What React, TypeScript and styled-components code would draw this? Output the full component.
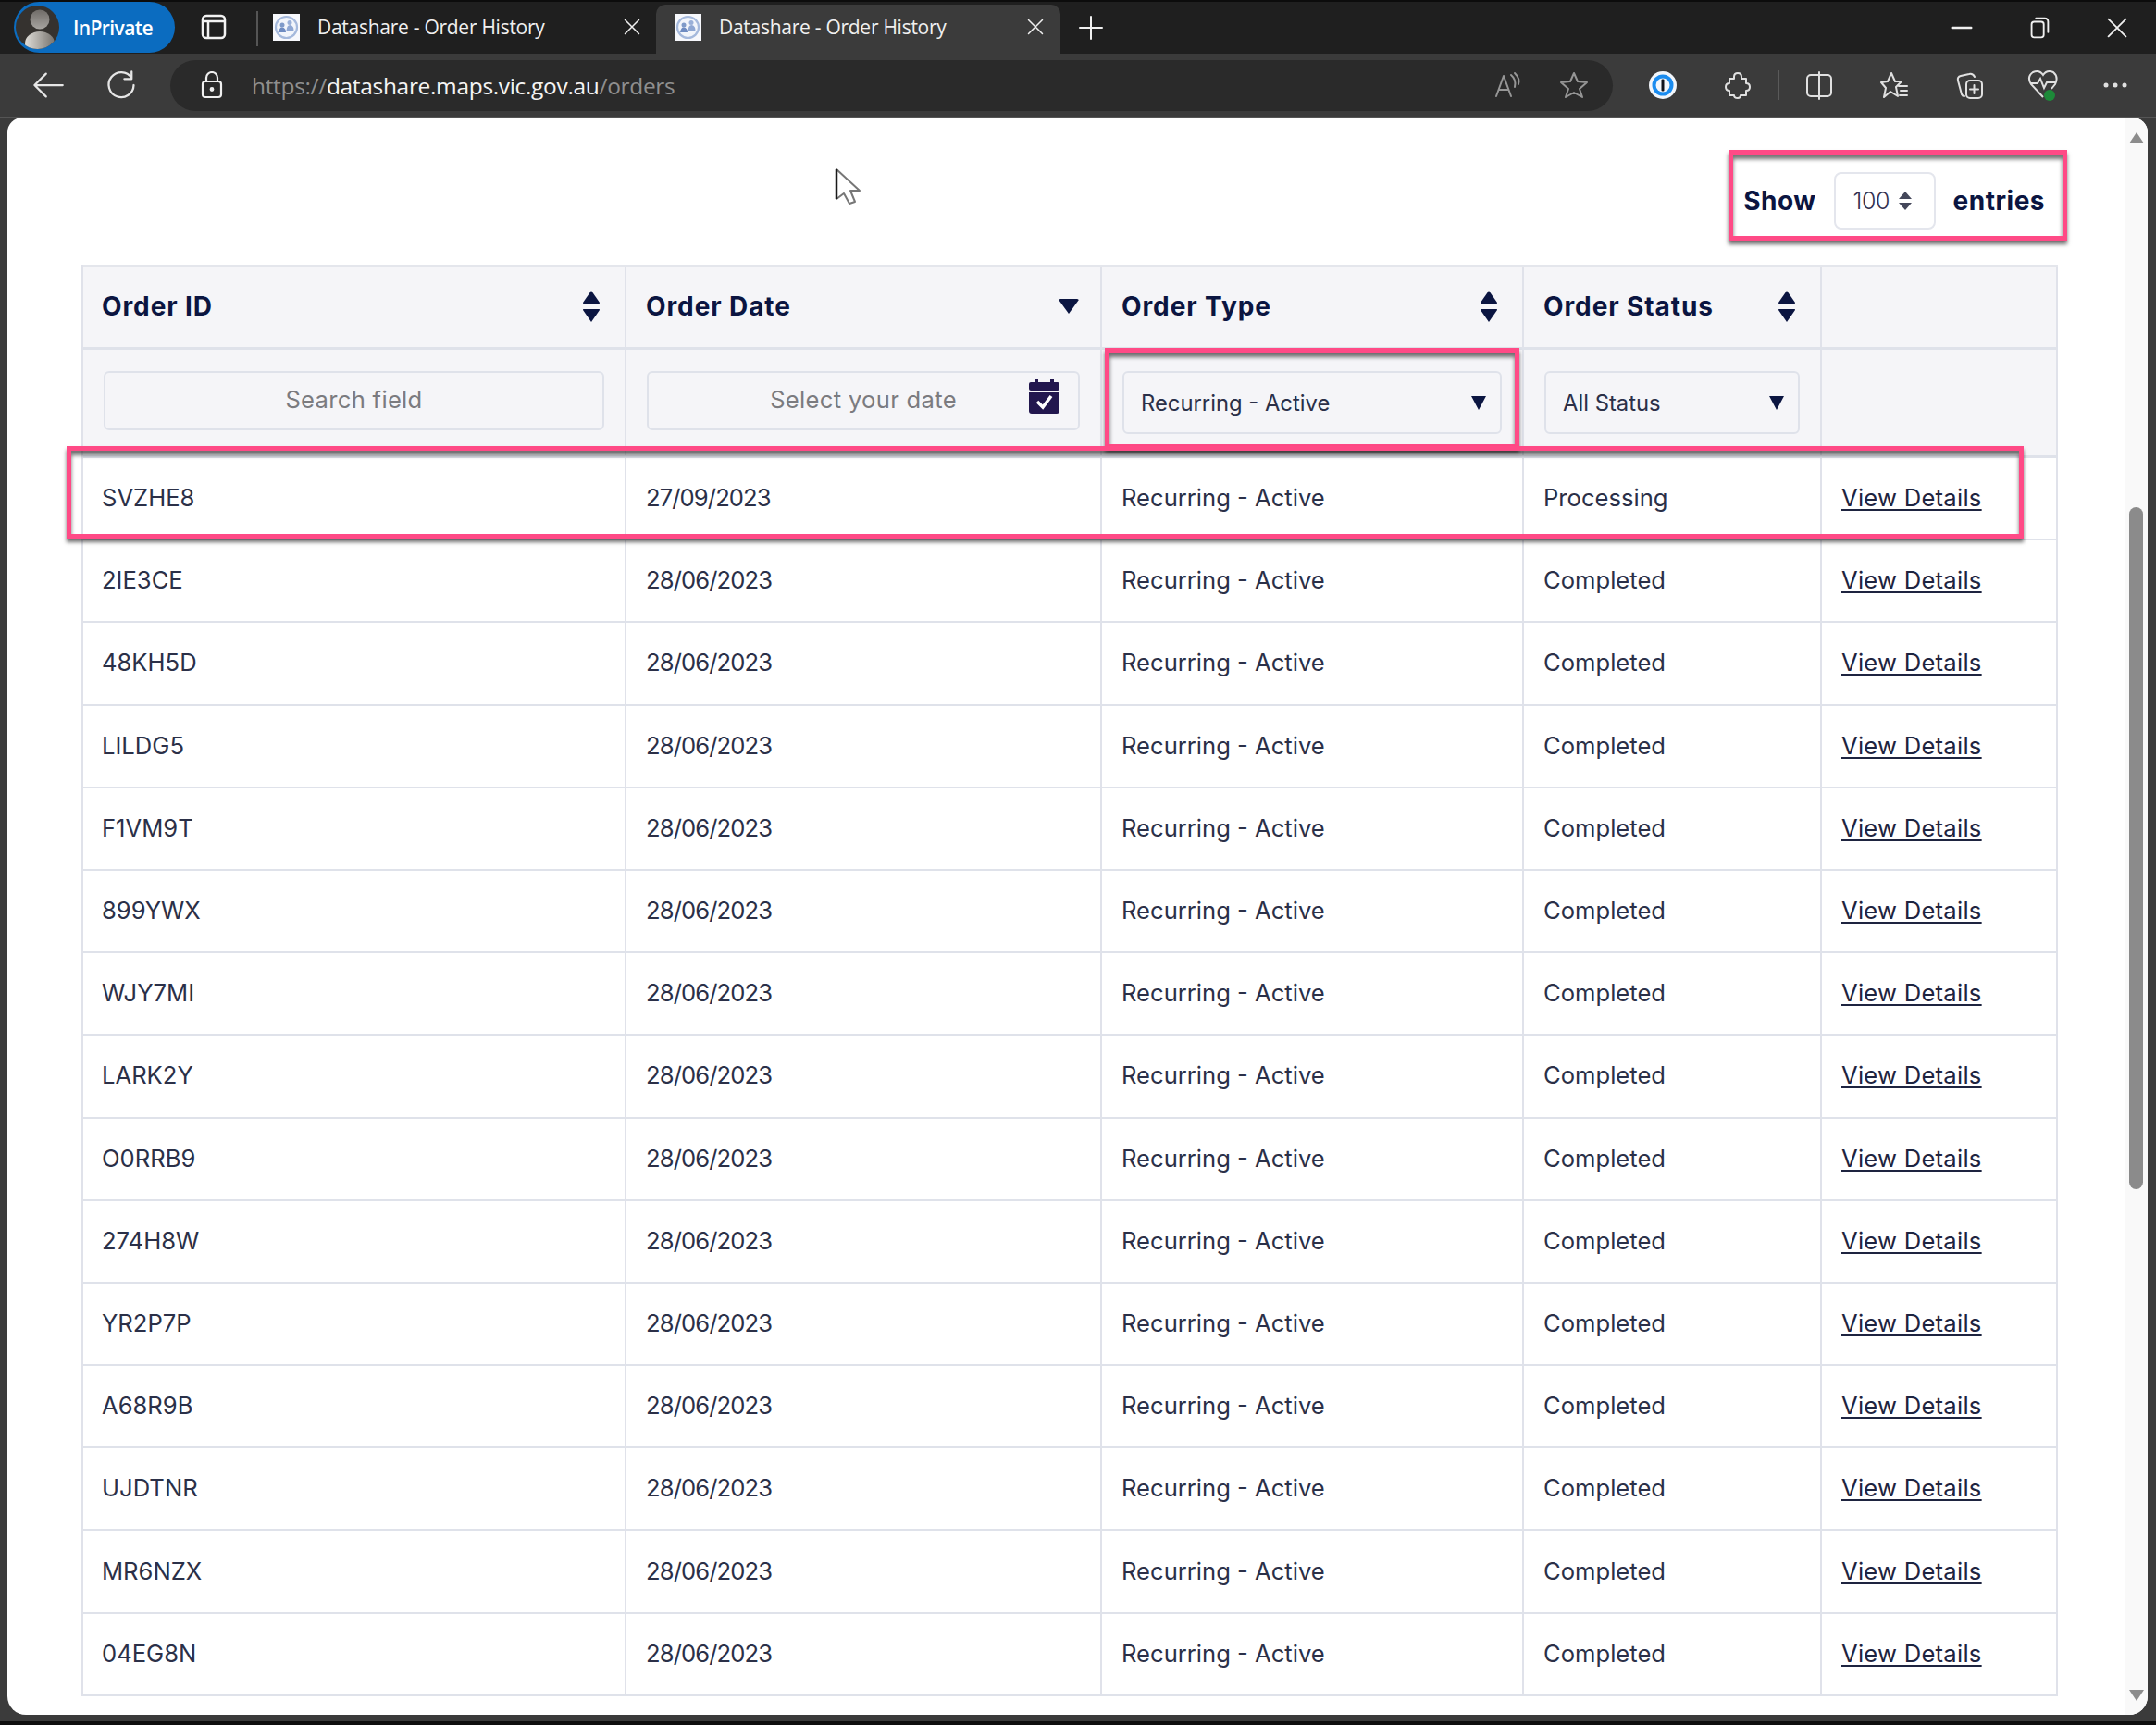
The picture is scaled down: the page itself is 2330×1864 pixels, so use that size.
import React from 'react';
import styled, {createGlobalStyle} from 'styled-components';

const orders = [
    ['SVZHE8', '27/09/2023', 'Processing'],
    ['2IE3CE', '28/06/2023', 'Completed'],
    ['48KH5D', '28/06/2023', 'Completed'],
    ['LILDG5', '28/06/2023', 'Completed'],
    ['F1VM9T', '28/06/2023', 'Completed'],
    ['899YWX', '28/06/2023', 'Completed'],
    ['WJY7MI', '28/06/2023', 'Completed'],
    ['LARK2Y', '28/06/2023', 'Completed'],
    ['O0RRB9', '28/06/2023', 'Completed'],
    ['274H8W', '28/06/2023', 'Completed'],
    ['YR2P7P', '28/06/2023', 'Completed'],
    ['A68R9B', '28/06/2023', 'Completed'],
    ['UJDTNR', '28/06/2023', 'Completed'],
    ['MR6NZX', '28/06/2023', 'Completed'],
    ['04EG8N', '28/06/2023', 'Completed'],
];

const GlobalStyle = createGlobalStyle`
  html, body {
    margin: 0;
    padding: 0;
    background: #0a0a0a;
  }
`;

const Window = styled.div`
  width: 2330px;
  height: 1864px;
  display: flex;
  flex-direction: column;
  overflow: hidden;
  background: #3b3b3b;
  border-top: 2px solid #0c0c0c;
  border-bottom: 4px solid #0e0e0e;
  box-sizing: border-box;
  font-family: "Inter", "Liberation Sans", sans-serif;
`;

const TitleBar = styled.div`
  height: 56px;
  flex-shrink: 0;
  display: flex;
  align-items: flex-end;
  background: #1f1f1f;
`;

const PrivatePill = styled.div`
  width: 174px;
  height: 55px;
  margin: 0 0 1px 15px;
  border-radius: 28px;
  background: #0b6cc0;
  display: flex;
  align-items: center;
  gap: 15px;
  padding-left: 2px;
  box-sizing: border-box;
  color: #fff;
  font-family: "Open Sans", sans-serif;
  font-size: 21px;
  font-weight: 600;
  letter-spacing: -0.6px;
`;

const Avatar = styled.div`
  width: 47px;
  height: 47px;
  border-radius: 50%;
  background: #35322f;
  overflow: hidden;
  flex-shrink: 0;
  svg { display: block; }
`;

const TabAction = styled.div`
  width: 31px;
  margin: 0 0 13px 28px;
  height: 30px;
  color: #f2f2f2;
`;

const TabDivider = styled.div`
  width: 2px;
  height: 38px;
  background: #555;
  margin: 0 16px 8px 29px;
`;

const Tab = styled.div<{$active?: boolean}>`
  width: ${p => (p.$active ? '437px' : '414px')};
  height: 53px;
  padding: 0 ${p => (p.$active ? '15px' : '14px')} 5px ${p => (p.$active ? '20px' : '0')};
  box-sizing: border-box;
  display: flex;
  align-items: center;
  color: #f0f0f0;
  background: ${p => (p.$active ? '#3b3b3b' : 'transparent')};
  border-radius: 10px 10px 0 0;
  font-family: "Open Sans", sans-serif;
  font-size: 21px;
  letter-spacing: -0.27px;
`;

const TabTitle = styled.span`
  flex: 1;
  margin-left: 19px;
  white-space: nowrap;
`;

const NewTab = styled.div`
  margin: 0 0 12px 17px;
  color: #f0f0f0;
  height: 32px;
`;

const WindowControls = styled.div`
  margin: 0 27px 12px auto;
  display: flex;
  align-items: center;
  gap: 54px;
  color: #f0f0f0;
  height: 32px;
`;

const Toolbar = styled.div`
  height: 69px;
  flex-shrink: 0;
  display: flex;
  align-items: center;
  color: #e6e6e6;
  border-bottom: 1px solid #555;
  box-sizing: border-box;
`;

const NavButton = styled.div<{$left: number}>`
  margin-left: ${p => p.$left}px;
  height: 36px;
  display: flex;
  align-items: center;
`;

const AddressBar = styled.div`
  width: 1559px;
  height: 55px;
  margin-left: 35px;
  padding: 0 26px 0 33px;
  box-sizing: border-box;
  border-radius: 28px;
  background: #2a2a2a;
  display: flex;
  align-items: center;
  color: #969696;
`;

const Url = styled.div`
  margin-left: 31px;
  flex: 1;
  font-family: "Open Sans", sans-serif;
  font-size: 24.5px;
  letter-spacing: -0.33px;
  color: #8f8f8f;
  strong {
    font-weight: 400;
    color: #f4f4f4;
  }
`;

const ToolGroup = styled.div`
  display: flex;
  align-items: center;
  gap: 39px;
`;

const ToolRow = styled.div`
  display: flex;
  align-items: center;
  margin-left: 36px;
`;

const ToolSlot = styled.div<{$left?: number}>`
  width: 36px;
  margin-left: ${p => p.$left ?? 0}px;
  display: flex;
  justify-content: center;
  align-items: center;
  height: 36px;
  color: #e0e0e0;
`;

const ToolSeparator = styled.div`
  width: 2px;
  height: 32px;
  background: #5a5a5a;
  margin: 0 25px;
`;

const Viewport = styled.div`
  flex: 1;
  min-height: 0;
  margin: 0 9px 7px 8px;
  display: flex;
  background: #fff;
  border-radius: 16px 16px 20px 20px;
  overflow: hidden;
`;

const Main = styled.main`
  position: relative;
  width: 2288px;
  padding-left: 80px;
  box-sizing: border-box;
`;

const Scrollbar = styled.div`
  flex: 1;
  background: #f9f9f9;
  display: flex;
  flex-direction: column;
  align-items: center;
  padding: 16px 0 15px;
  box-sizing: border-box;
`;

const ScrollArrow = styled.div<{$down?: boolean}>`
  width: 0;
  height: 0;
  border-left: 8px solid transparent;
  border-right: 8px solid transparent;
  border-top: ${p => (p.$down ? '12px solid #8c8c8c' : '0')};
  border-bottom: ${p => (p.$down ? '0' : '12px solid #8c8c8c')};
  margin-top: ${p => (p.$down ? 'auto' : '0')};
`;

const ScrollThumb = styled.div`
  width: 15px;
  height: 737px;
  margin-top: 393px;
  border-radius: 8px;
  background: #8b8b8b;
`;

const EntriesBar = styled.div`
  height: 159px;
  width: 2136px;
  padding: 59px 14px 0 0;
  box-sizing: border-box;
  display: flex;
  justify-content: flex-end;
  align-items: flex-start;
  color: #0b1541;
  font-weight: 700;
  font-size: 28px;
`;

const EntriesLabel = styled.span`
  line-height: 62px;
  letter-spacing: 0.5px;
`;

const EntriesSelect = styled.div`
  width: 110px;
  height: 62px;
  margin: 0 19px;
  padding-left: 19px;
  box-sizing: border-box;
  border: 2px solid #e4e6ed;
  border-radius: 8px;
  display: flex;
  align-items: center;
  gap: 10px;
  font-size: 25px;
  font-weight: 300;
  letter-spacing: -0.4px;
  color: #33304f;
`;

const Table = styled.div`
  width: 2136px;
  border-left: 2px solid #e0e2ea;
  box-sizing: border-box;
  color: #2b3048;
  font-size: 25.6px;
`;

const Row = styled.div<{$head?: boolean; $height: number}>`
  display: grid;
  grid-template-columns: 587px 514px 456px 322px 255px;
  height: ${p => p.$height}px;
  box-sizing: border-box;
  border-bottom: ${p => (p.$head ? '3px' : '2px')} solid #dfe2ea;
  background: ${p => (p.$head ? '#f5f5f8' : '#fff')};
`;

const Cell = styled.div<{$first?: boolean}>`
  display: flex;
  align-items: center;
  justify-content: space-between;
  padding: 0 26px 2px ${p => (p.$first ? 20 : 21)}px;
  border-right: 2px solid #e0e2ea;
  box-sizing: border-box;
  min-width: 0;
  white-space: nowrap;
`;

const DateCell = styled(Cell)`
  letter-spacing: -0.9px;
`;

const HeadCell = styled(Cell)<{$tight?: boolean}>`
  padding-right: ${p => (p.$tight ? 23 : 26)}px;
  padding-bottom: 1px;
  font-size: 28px;
  font-weight: 700;
  color: #0b1541;
  letter-spacing: 0.9px;
`;

const FirstHeadRow = styled(Row)`
  border-top: 2px solid #e4e6ec;
`;

const FilterCell = styled(Cell)`
  padding: 23px 22px 0;
  align-items: flex-start;
`;

const Field = styled.div`
  position: relative;
  flex: 1;
  height: 64px;
  padding-bottom: 3px;
  border: 2px solid #dfe2ea;
  border-radius: 6px;
  box-sizing: border-box;
  display: flex;
  align-items: center;
  justify-content: center;
  color: #7b7b7f;
  letter-spacing: 0.3px;
`;

const CalendarSlot = styled.div`
  position: absolute;
  right: 20px;
  top: 6px;
  color: #22174e;
`;

const FilterSelect = styled.div`
  flex: 1;
  height: 68px;
  border: 2px solid #dfe2ea;
  border-radius: 6px;
  box-sizing: border-box;
  display: flex;
  align-items: center;
  justify-content: space-between;
  padding: 0 15px 0 18px;
  font-size: 23.8px;
  color: #2b3048;
`;

const DetailsLink = styled.a`
  color: #1e2440;
  letter-spacing: 0.25px;
  text-decoration: underline;
  text-decoration-thickness: 2px;
  text-underline-offset: 3px;
`;

const Highlight = styled.div<{$x: number; $y: number; $w: number; $h: number}>`
  position: absolute;
  left: ${p => p.$x}px;
  top: ${p => p.$y}px;
  width: ${p => p.$w}px;
  height: ${p => p.$h}px;
  box-sizing: border-box;
  border: 5px solid #ff4a86;
  box-shadow: 0 4px 4px rgba(0, 0, 0, 0.55), inset 0 5px 4px rgba(0, 0, 0, 0.55);
  pointer-events: none;
`;

const Pointer = styled.svg`
  position: absolute;
  left: 894px;
  top: 54px;
`;

const Favicon = () => (
    <svg width="29" height="29" viewBox="0 0 29 29">
        <rect width="29" height="29" fill="#f7f8fc"/>
        <circle cx="14.500" cy="14.500" r="11.500" fill="#f2f5fb" stroke="#a5b9dc" strokeWidth="2.200"/>
        <circle cx="10" cy="12" r="2.500" fill="#7f9ac9"/>
        <path d="M6 20 Q7 14 10 14.500 Q14 15 14 20Z" fill="#6f8cc2"/>
        <circle cx="18" cy="9.500" r="2.500" fill="#9ab0d8"/>
        <path d="M14.500 18 Q15 12 18.500 12 Q23 13 22.500 19Z" fill="#8fa7d3"/>
    </svg>
);

const Line = ({size = 32, children}: {size?: number; children: React.ReactNode}) => (
    <svg width={size} height={size} viewBox="0 0 32 32" fill="none" stroke="currentColor" strokeWidth="2" strokeLinecap="round" strokeLinejoin="round">
        {children}
    </svg>
);

const SortBoth = () => (
    <svg width="20" height="36" viewBox="0 0 20 36" fill="#0b1541">
        <path d="M10 1 L19 14 Q19.500 15 18 15 H2 Q.5 15 1 14Z"/>
        <path d="M10 35 L19 22 Q19.500 21 18 21 H2 Q.5 21 1 22Z"/>
    </svg>
);

const SortDown = () => (
    <svg width="22" height="16" viewBox="0 0 22 16" fill="#0b1541">
        <path d="M11 16 L21.500 1.500 Q22 0 20 0 H2 Q0 0 .5 1.500Z"/>
    </svg>
);

const Caret = () => (
    <svg width="16" height="15" viewBox="0 0 16 15" fill="#0b1541">
        <path d="M8 15 L16 0 H0Z"/>
    </svg>
);

const Calendar = () => (
    <svg width="33" height="38" viewBox="0 0 33 38" fill="currentColor">
        <rect x="6" y="0" width="4" height="7" rx="1"/>
        <rect x="23" y="0" width="4" height="7" rx="1"/>
        <rect x="0" y="4" width="33" height="9" rx="2"/>
        <path d="M0 15 H33 V35 Q33 38 30 38 H3 Q0 38 0 35Z"/>
        <path d="M9 25 L15 31 L24 19" fill="none" stroke="#fff" strokeWidth="3.500"/>
    </svg>
);

const App = () => {
    return (
        <Window>
            <GlobalStyle/>
            <TitleBar>
                <PrivatePill>
                    <Avatar>
                        <svg width="47" height="47" viewBox="0 0 47 47">
                            <defs>
                                <linearGradient id="head" x1="0" y1="0" x2="0" y2="1">
                                    <stop offset="0" stopColor="#6f6b67"/>
                                    <stop offset="1" stopColor="#a7a4a0"/>
                                </linearGradient>
                                <linearGradient id="shoulders" x1="0" y1="0" x2="1" y2="0">
                                    <stop offset="0" stopColor="#e0ded9"/>
                                    <stop offset="1" stopColor="#77736e"/>
                                </linearGradient>
                            </defs>
                            <circle cx="26" cy="15" r="10.500" fill="url(#head)"/>
                            <ellipse cx="26" cy="41" rx="16" ry="13" fill="url(#shoulders)"/>
                        </svg>
                    </Avatar>
                    InPrivate
                </PrivatePill>
                <TabAction>
                    <svg width="28" height="28" viewBox="0 0 28 28" fill="none" stroke="currentColor" strokeWidth="2.500">
                        <rect x="2" y="2" width="24" height="24" rx="4"/>
                        <path d="M2 8 H26 M8 8 V26"/>
                    </svg>
                </TabAction>
                <TabDivider/>
                <Tab>
                    <Favicon/>
                    <TabTitle>Datashare - Order History</TabTitle>
                    <Line size={24}><path d="M6 6 L26 26 M26 6 L6 26"/></Line>
                </Tab>
                <Tab $active>
                    <Favicon/>
                    <TabTitle>Datashare - Order History</TabTitle>
                    <Line size={24}><path d="M6 6 L26 26 M26 6 L6 26"/></Line>
                </Tab>
                <NewTab>
                    <Line><path d="M16 4 V28 M4 16 H28"/></Line>
                </NewTab>
                <WindowControls>
                    <Line size={30}><path d="M5 16 H27" strokeWidth="2.500"/></Line>
                    <Line size={30}><rect x="7" y="9" width="14" height="18" rx="3"/><path d="M12 5 H22 Q26 5 26 9 V21"/></Line>
                    <Line size={30}><path d="M6 6 L26 26 M26 6 L6 26"/></Line>
                </WindowControls>
            </TitleBar>
            <Toolbar>
                <NavButton $left={34}>
                    <Line size={36}><path d="M3 16 H30 M3 16 L14 5 M3 16 L14 27"/></Line>
                </NavButton>
                <NavButton $left={43}>
                    <Line size={36}><path d="M26 9 A12 12 0 1 0 28 16 M26 3 V10 H19"/></Line>
                </NavButton>
                <AddressBar>
                    <svg width="24" height="30" viewBox="0 0 24 30" fill="none" stroke="#efefef" strokeWidth="2.200">
                        <rect x="2" y="11" width="20" height="17" rx="3"/>
                        <path d="M6 11 V7 A6 6 0 0 1 18 7 V11"/>
                        <circle cx="12" cy="19.500" r="1.300" fill="#efefef"/>
                    </svg>
                    <Url>https://<strong>datashare.maps.vic.gov.au</strong>/orders</Url>
                    <ToolGroup>
                        <Line><path d="M3 28 L11 6 L19 28 M6 21 H16 M19 5 Q25 10 23 18 M23 3 Q29 9 27 15"/></Line>
                        <Line><path d="M16 3 L20 12 L30 13 L22 20 L25 29 L16 24 L7 29 L10 20 L2 13 L12 12Z"/></Line>
                    </ToolGroup>
                </AddressBar>
                <ToolRow>
                    <ToolSlot>
                        <svg width="30" height="30" viewBox="0 0 30 30">
                            <circle cx="15" cy="15" r="15" fill="#f2f6fb"/>
                            <circle cx="15" cy="15" r="11.500" fill="#1a8cf0"/>
                            <circle cx="15" cy="15" r="7.500" fill="#f2f6fb"/>
                            <rect x="13.500" y="8.500" width="3" height="13" rx="1" fill="#10131c"/>
                        </svg>
                    </ToolSlot>
                    <ToolSlot $left={45}>
                        <Line><path d="M12 7 Q12 3 16 3 Q20 3 20 7 V9 H25 V14 Q29 14 29 18 Q29 22 25 22 V27 H19 Q19 30 16 30 Q12 30 12 27 H7 V22 Q3 22 3 18 Q3 14 7 14 V9 H12Z"/></Line>
                    </ToolSlot>
                    <ToolSeparator/>
                    <ToolSlot>
                        <Line><rect x="3" y="5" width="26" height="23" rx="4"/><path d="M16 2 V31"/></Line>
                    </ToolSlot>
                    <ToolSlot $left={45}>
                        <Line><path d="M13 3 L17 12 H24 L18 18 L20 28 L12 23 L5 29 L7 19 L2 13 L9 12Z M21 17 H30 M23 22 H30 M22 27 H30"/></Line>
                    </ToolSlot>
                    <ToolSlot $left={45}>
                        <Line><rect x="13" y="11" width="17" height="19" rx="4"/><path d="M21.500 16 V25 M17 20.500 H26 M22 7 Q20 3 16 4 L7 6 Q3 7 4 11 L8 26 Q9 28 11 28"/></Line>
                    </ToolSlot>
                    <ToolSlot $left={44}>
                        <svg width="34" height="36" viewBox="0 0 34 36" fill="none" stroke="currentColor" strokeWidth="2">
                            <path d="M17 31 L4 17 Q-1 9 6 4 Q13 1 17 7 Q21 1 28 4 Q34 9 30 17 L26 22"/>
                            <path d="M3 16 H11 L14 11 L18 21 L21 15 H30"/>
                            <circle cx="24" cy="29" r="6" fill="#1d8a39" stroke="none"/>
                        </svg>
                    </ToolSlot>
                    <ToolSlot $left={42}>
                        <svg width="26" height="6" viewBox="0 0 26 6" fill="currentColor">
                            <circle cx="3" cy="3" r="2.500"/><circle cx="13" cy="3" r="2.500"/><circle cx="23" cy="3" r="2.500"/>
                        </svg>
                    </ToolSlot>
                </ToolRow>
            </Toolbar>
            <Viewport>
                <Main>
                    <EntriesBar>
                        <EntriesLabel>Show</EntriesLabel>
                        <EntriesSelect>
                            100
                            <svg width="14" height="20" viewBox="0 0 14 20" fill="#44475a">
                                <path d="M7 0 L14 8 H0Z M7 20 L14 12 H0Z"/>
                            </svg>
                        </EntriesSelect>
                        <EntriesLabel>entries</EntriesLabel>
                    </EntriesBar>
                    <Table>
                        <FirstHeadRow $head $height={92}>
                            <HeadCell $first>Order ID<SortBoth/></HeadCell>
                            <HeadCell $tight>Order Date<SortDown/></HeadCell>
                            <HeadCell>Order Type<SortBoth/></HeadCell>
                            <HeadCell>Order Status<SortBoth/></HeadCell>
                            <HeadCell/>
                        </FirstHeadRow>
                        <Row $head $height={117}>
                            <FilterCell><Field>Search field</Field></FilterCell>
                            <FilterCell>
                                <Field>
                                    Select your date
                                    <CalendarSlot><Calendar/></CalendarSlot>
                                </Field>
                            </FilterCell>
                            <FilterCell><FilterSelect>Recurring - Active<Caret/></FilterSelect></FilterCell>
                            <FilterCell><FilterSelect>All Status<Caret/></FilterSelect></FilterCell>
                            <FilterCell/>
                        </Row>
                        {orders.map(([id, date, status]) => (
                            <Row key={id} $height={89.2}>
                                <Cell $first>{id}</Cell>
                                <DateCell>{date}</DateCell>
                                <Cell>Recurring - Active</Cell>
                                <Cell>{status}</Cell>
                                <Cell><DetailsLink>View Details</DetailsLink></Cell>
                            </Row>
                        ))}
                    </Table>
                    <Highlight $x={1860} $y={35} $w={366} $h={98}/>
                    <Highlight $x={1186} $y={249} $w={448} $h={109}/>
                    <Highlight $x={64} $y={355} $w={2115} $h={100}/>
                    <Pointer width="30" height="42" viewBox="0 0 30 42">
                        <path d="M2 2 L27 25 L17 25 L22 37 L16 39 L10 28 L2 34Z" fill="#fff" stroke="#777" strokeWidth="2" strokeLinejoin="round"/>
                        <path d="M2 2 V34" fill="none" stroke="#1a1a1a" strokeWidth="2.500"/>
                    </Pointer>
                </Main>
                <Scrollbar>
                    <ScrollArrow/>
                    <ScrollThumb/>
                    <ScrollArrow $down/>
                </Scrollbar>
            </Viewport>
        </Window>
    );
};

export default App;
